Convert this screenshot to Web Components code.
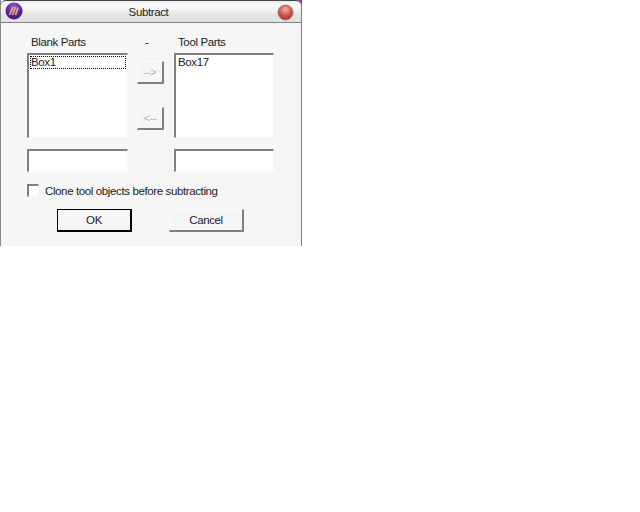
<!DOCTYPE html>
<html>
<head>
<meta charset="utf-8">
<title>Subtract</title>
<style>
html, body { margin: 0; background: #fff; }
</style>
</head>
<body>
<subtract-dialog></subtract-dialog>
<script>
const FONT = '"Liberation Sans", Arial, sans-serif';
const SUNKEN = `
    border-top: 2px solid #808080;
    border-left: 2px solid #808080;
    border-right: 1px solid #f9f9f9;
    border-bottom: 1px solid #f9f9f9;
`;

class DlgWindow extends HTMLElement {
    constructor() {
        super();
        var shadowRoot = this.attachShadow({ mode: 'open' });
        shadowRoot.innerHTML = `
            <style>
                :host {
                    display: block;
                    position: relative;
                    box-sizing: border-box;
                    width: 302px;
                    height: 246px;
                    background: #f6f6f6;
                    border-left: 1px solid #8a8a8a;
                    border-right: 1px solid #7f7f7f;
                    font: 11.5px ${FONT};
                    letter-spacing: -0.38px;
                    color: #222;
                }
                .title {
                    box-sizing: border-box;
                    height: 23px;
                    display: grid;
                    grid-template-columns: 26px 1fr 30px;
                    align-items: center;
                    border-top: 1px solid #444;
                    border-bottom: 1px solid #808080;
                    border-radius: 5px 5px 0 0;
                    background: linear-gradient(#e8e8e8 0, #fbfbfb 3px, #f2f2f2 9px, #e6e6e6 13px, #e0e0e0 21px);
                }
                .title span { text-align: center; padding-right: 1px; }
                svg { display: block; margin: auto; }
                .logo { transform: translateY(-1px); }
                .close { transform: translate(-1px, 1px); }
                .corner {
                    position: absolute;
                    top: 0;
                    right: -1px;
                    width: 4px;
                    height: 5px;
                    background: #a030b0;
                    clip-path: polygon(0 0, 100% 0, 100% 100%);
                }
            </style>
            <div class="title">
                <svg class="logo" width="18" height="18" viewBox="0 0 18 18">
                    <defs><radialGradient id="p" cx=".5" cy=".3" r=".75">
                        <stop offset="0" stop-color="#9a6ad0"/>
                        <stop offset=".6" stop-color="#5a2296"/>
                        <stop offset="1" stop-color="#3a1070"/>
                    </radialGradient></defs>
                    <circle cx="9" cy="9" r="8.5" fill="url(#p)"/>
                    <path d="M4.5 13 8 5M7.5 13 10.5 5M10.5 13 13 5.5" stroke="#eeb27c" stroke-width="1.5" fill="none"/>
                </svg>
                <span>Subtract</span>
                <svg class="close" width="17" height="17" viewBox="0 0 17 17">
                    <defs><radialGradient id="r" cx=".5" cy=".3" r=".75">
                        <stop offset="0" stop-color="#f2b0aa"/>
                        <stop offset=".5" stop-color="#d8584e"/>
                        <stop offset="1" stop-color="#a02a24"/>
                    </radialGradient></defs>
                    <circle cx="8.5" cy="8.5" r="7.5" fill="url(#r)" stroke="#8a8080"/>
                </svg>
            </div>
            <slot></slot>
            <div class="corner"></div>
        `;
    }
}
customElements.define('dlg-window', DlgWindow);

class DlgListbox extends HTMLElement {
    constructor() {
        super();
        var shadowRoot = this.attachShadow({ mode: 'open' });
        shadowRoot.innerHTML = `
            <style>
                :host {
                    display: block;
                    box-sizing: border-box;
                    padding: 1px;
                    background: #fff;
                    ${SUNKEN}
                }
            </style>
            <slot></slot>
        `;
    }
}
customElements.define('dlg-listbox', DlgListbox);

class DlgItem extends HTMLElement {
    constructor() {
        super();
        var shadowRoot = this.attachShadow({ mode: 'open' });
        shadowRoot.innerHTML = `
            <style>
                :host {
                    display: block;
                    box-sizing: border-box;
                    height: 13px;
                    line-height: 13px;
                    padding-left: 1px;
                }
                :host([focused]) { outline: 1px dotted #000; outline-offset: -1px; }
            </style>
            <slot></slot>
        `;
    }
}
customElements.define('dlg-item', DlgItem);

class DlgField extends HTMLElement {
    constructor() {
        super();
        var shadowRoot = this.attachShadow({ mode: 'open' });
        shadowRoot.innerHTML = `
            <style>
                :host {
                    display: block;
                    box-sizing: border-box;
                    background: #fff;
                    ${SUNKEN}
                }
            </style>
        `;
    }
}
customElements.define('dlg-field', DlgField);

class DlgButton extends HTMLElement {
    constructor() {
        super();
        var shadowRoot = this.attachShadow({ mode: 'open' });
        shadowRoot.innerHTML = `
            <style>
                :host {
                    display: flex;
                    align-items: center;
                    justify-content: center;
                    box-sizing: border-box;
                    width: 75px;
                    height: 23px;
                    background: #f6f6f6;
                    border-top: 1px solid #fcfcfc;
                    border-left: 1px solid #fcfcfc;
                    border-right: 2px solid #808080;
                    border-bottom: 2px solid #808080;
                }
                :host([default]) {
                    border: 1px solid #000;
                    border-right-width: 2px;
                    border-bottom-width: 2px;
                }
                :host([small]) {
                    width: 27px;
                    color: #b0b0b0;
                    font-size: 11px;
                    text-shadow: 1px 1px 0 #fff;
                }
            </style>
            <slot></slot>
        `;
    }
}
customElements.define('dlg-button', DlgButton);

class DlgCheck extends HTMLElement {
    constructor() {
        super();
        var shadowRoot = this.attachShadow({ mode: 'open' });
        shadowRoot.innerHTML = `
            <style>
                :host {
                    display: flex;
                    align-items: center;
                    gap: 6px;
                    height: 13px;
                }
                i {
                    box-sizing: border-box;
                    width: 12px;
                    height: 13px;
                    background: #fff;
                    ${SUNKEN}
                }
            </style>
            <i></i><slot></slot>
        `;
    }
}
customElements.define('dlg-check', DlgCheck);

class SubtractDialog extends HTMLElement {
    constructor() {
        super();
        var shadowRoot = this.attachShadow({ mode: 'open' });
        shadowRoot.innerHTML = `
            <style>
                :host { display: block; }
                .form {
                    display: grid;
                    grid-template-columns: 101px 46px 100px;
                    grid-template-rows: 19px 85px 24px 14px 23px;
                    row-gap: 11px;
                    padding-left: 26px;
                }
                .label { padding: 13px 0 0 4px; }
                .dash { padding: 13px 0 0 17px; }
                .arrows {
                    display: flex;
                    flex-direction: column;
                    gap: 23px;
                    padding: 8px 0 0 9px;
                }
                .fields, .check, .buttons { grid-column: 1 / 4; }
                .fields {
                    display: grid;
                    grid-template-columns: 101px 100px;
                    grid-template-rows: 23px;
                    column-gap: 46px;
                }
                .buttons {
                    display: flex;
                    gap: 37px;
                    padding-left: 30px;
                }
            </style>
            <dlg-window>
                <div class="form">
                    <div class="label">Blank Parts</div>
                    <div class="dash">-</div>
                    <div class="label">Tool Parts</div>
                    <dlg-listbox><dlg-item focused>Box1</dlg-item></dlg-listbox>
                    <div class="arrows">
                        <dlg-button small>--&gt;</dlg-button>
                        <dlg-button small>&lt;--</dlg-button>
                    </div>
                    <dlg-listbox><dlg-item>Box17</dlg-item></dlg-listbox>
                    <div class="fields"><dlg-field></dlg-field><dlg-field></dlg-field></div>
                    <dlg-check class="check">Clone tool objects before subtracting</dlg-check>
                    <div class="buttons">
                        <dlg-button default>OK</dlg-button>
                        <dlg-button>Cancel</dlg-button>
                    </div>
                </div>
            </dlg-window>
        `;
    }
}
customElements.define('subtract-dialog', SubtractDialog);
</script>
</body>
</html>
